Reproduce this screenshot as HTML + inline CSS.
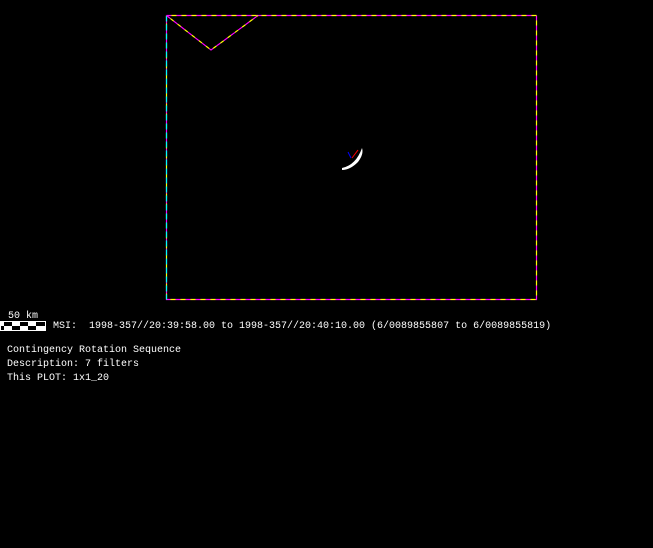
<!DOCTYPE html><html><head><style>
body{margin:0;background:#000;width:653px;height:548px;overflow:hidden;position:relative;font-family:"Liberation Mono","DejaVu Sans Mono",monospace;font-size:10px;color:#fff}
.t{position:absolute;white-space:pre;line-height:14px}
</style></head><body>
<svg width="653" height="548" style="position:absolute;left:0;top:0">
<g fill="none" stroke-width="1.2">
<path d="M166.5 15.5H536.5V299.5H166.5Z" stroke="#f0f" stroke-dasharray="5 5"/>
<path d="M166.5 15.5H536.5V299.5H166.5Z" stroke="#ff0" stroke-dasharray="5 5" stroke-dashoffset="5"/>
<path d="M166.5 15.5V299.5" stroke="#0ff" stroke-dasharray="6 3"/>
<path d="M166.5 15.5L211 50L258 15.5" stroke="#f0f" stroke-dasharray="5 4"/>
<path d="M166.5 15.5L211 50L258 15.5" stroke="#ff0" stroke-dasharray="4 5" stroke-dashoffset="4"/>
</g>
<path d="M342 168Q356 165 362 148Q364 154 358 162Q350 170 342 170Z" fill="#fff"/>
<path d="M348 152L351 158" stroke="#00f"/><path d="M352 158L358 150" stroke="#f00"/>
<rect x="0.5" y="321.5" width="45" height="9" fill="#000" stroke="#fff"/>
<g fill="#fff"><rect x="0" y="322" width="4" height="4"/><rect x="12" y="322" width="8" height="4"/><rect x="28" y="322" width="8" height="4"/><rect x="4" y="326" width="8" height="4"/><rect x="20" y="326" width="8" height="4"/><rect x="36" y="326" width="9" height="4"/></g>
</svg>
<div class="t" style="left:8px;top:310px">50 km</div>
<div class="t" style="left:53px;top:320px">MSI:  1998-357//20:39:58.00 to 1998-357//20:40:10.00 (6/0089855807 to 6/0089855819)</div>
<div class="t" style="left:7px;top:344px">Contingency Rotation Sequence
Description: 7 filters
This PLOT: 1x1_20</div>
</body></html>
